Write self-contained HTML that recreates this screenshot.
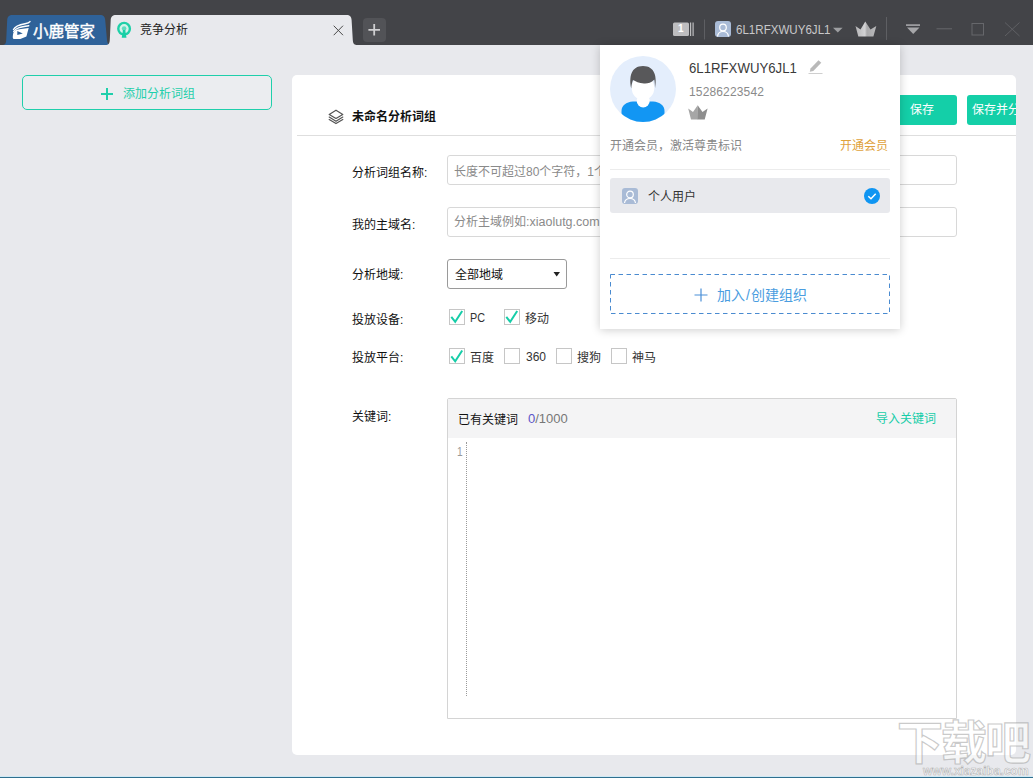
<!DOCTYPE html>
<html lang="zh-CN">
<head>
<meta charset="utf-8">
<title>小鹿管家 - 竞争分析</title>
<style>
*{box-sizing:border-box;margin:0;padding:0}
html,body{width:1033px;height:778px;overflow:hidden}
body{position:relative;background:#e8e9ed;font-family:"Liberation Sans","Noto Sans CJK SC",sans-serif;font-size:12px;color:#222}
.abs{position:absolute}
.t{position:absolute;white-space:nowrap;line-height:1}
.sx{display:inline-block;transform-origin:0 50%}
#titlebar{position:absolute;left:0;top:0;width:1033px;height:45px;background:#434448}
#logotab{position:absolute;left:0;top:0}
#plus{position:absolute;left:363px;top:18px;width:23px;height:24px;border-radius:4px;background:#525357}
#addbtn{position:absolute;left:22px;top:75px;width:250px;height:35px;border:1px solid #1fcfab;border-radius:5px;background:#ebedf0}
#card{position:absolute;left:292px;top:75px;width:724px;height:680px;background:#fff;border-radius:5px;overflow:hidden}
.lbl{position:absolute;left:60px;font-size:12px;color:#111;white-space:nowrap;line-height:14px}
.inp{position:absolute;left:155px;width:510px;height:30px;border:1px solid #d8d8d8;border-radius:3px;background:#fff;font-size:12px;color:#8a8a8a;white-space:nowrap;overflow:hidden}
.inp .t{left:6px}
.cb{position:absolute;width:16px;height:16px;border:1px solid #c6c6c6;background:#fff}
.cbt{position:absolute;font-size:12px;color:#333;white-space:nowrap;line-height:14px}
.btn{position:absolute;top:20px;width:70px;height:30px;background:#14cfa8;border-radius:3px;color:#fff;font-size:12px;line-height:31px;white-space:nowrap;text-align:center}
#pop{position:absolute;left:600px;top:45px;width:300px;height:284px;background:#fff;box-shadow:0 1px 9px rgba(0,0,0,.2)}
</style>
</head>
<body>
<div id="titlebar">
  <svg id="logotab" width="400" height="45" viewBox="0 0 400 45">
    <path d="M3 45 C5.500 44.500 6 43 6.200 40 L7.200 20 C7.500 16.500 9 15 12.500 15 L100 15 C103.500 15 104.800 16.500 105.200 20 L107 40 C107.300 43 108 44.500 110.500 45 Z" fill="#2f6299"/>
    <path d="M106.500 45 C109 44.500 109.600 43 109.800 40 L110.700 20 C111 16.500 112.500 15 116 15 L346.500 15 C350 15 351.300 16.500 351.600 20 L352.800 40 C353 43 353.600 44.500 356.500 45 Z" fill="#e8e9ed"/>
    <!-- logo glyph -->
    <g fill="none" stroke="#fff" stroke-width="1.400" stroke-linecap="round">
      <path d="M13.500 29.600 C15.200 25.600 20 24.500 25 23.700 C27.800 23.200 29.200 22.700 30 21.600"/>
      <path d="M13.700 31.500 C16 27.700 21 26.900 28.800 25.700"/>
    </g>
    <path fill="#fff" fill-rule="evenodd" d="M13.100 34 C13.800 30.600 17 29.600 21 29.100 L28.700 28 L26.400 36.600 L20.300 39.100 L14 39 C12.600 39 12.500 37.600 13.100 34 Z M17.300 31 L17.300 35 L22.800 33.400 Z"/>
    <!-- tab icon -->
    <circle cx="124.100" cy="28.700" r="5.800" fill="#d4f3ea" stroke="#1fd0a8" stroke-width="2.400"/>
    <path d="M118.600 35.300 L129.600 35.300 L129.600 38.500 L118.600 38.500 Z" fill="#e8e9ed"/>
    <circle cx="124.100" cy="28.500" r="2.300" fill="#5fdcc0"/>
    <path d="M123 30 L125.200 30 L126.500 37.700 L121.700 37.700 Z" fill="#17cfa6"/>
    <!-- close x -->
    <path d="M333.700 25.700 L343 35.200 M343 25.700 L333.700 35.200" stroke="#4a4a4a" stroke-width="1" fill="none"/>
  </svg>
  <div class="t" style="left:33px;top:24px;font-size:15.500px;font-weight:normal;color:#fff;-webkit-text-stroke:.450px #fff">小鹿管家</div>
  <div class="t" style="left:140px;top:24px;font-size:12px;color:#222">竞争分析</div>
  <div id="plus"><svg width="23" height="24"><path d="M11.200 6 V17.600 M5.400 11.800 H17" stroke="#cfcfd1" stroke-width="1.800" fill="none"/></svg></div>

  <svg class="abs" style="left:660px;top:10px" width="373" height="35" viewBox="660 10 373 35">
    <defs>
      <linearGradient id="cg" x1="0" x2="1" y1="0" y2="0"><stop offset="0" stop-color="#b4b4b6"/><stop offset=".45" stop-color="#d2d2d4"/><stop offset=".55" stop-color="#a9a9ab"/><stop offset="1" stop-color="#b9b9bb"/></linearGradient>
    </defs>
    <rect x="673" y="22.500" width="16" height="13.500" rx="1.500" fill="#bdbdbf"/>
    <rect x="690" y="22.500" width="1.200" height="13.500" fill="#bdbdbf"/>
    <rect x="692.500" y="22.500" width="1.200" height="13.500" fill="#bdbdbf"/>
    <rect x="704" y="19.500" width="1" height="20" fill="#5e5f63"/>
    <rect x="715" y="21" width="16" height="16" rx="3" fill="#a9bbd6"/>
    <circle cx="723" cy="27.500" r="3.300" fill="none" stroke="#fff" stroke-width="1.200"/>
    <path d="M717.500 36.500 C718 32.500 720.500 31.500 723 31.500 C725.500 31.500 728 32.500 728.500 36.500" fill="none" stroke="#fff" stroke-width="1.200"/>
    <path d="M833 27.800 L842.600 27.800 L837.800 32.500 Z" fill="#9d9ea1"/>
    <path d="M855.500 26 L860.500 29.600 L865.300 21.600 L870.500 29.600 L876.300 26 L873.400 36.500 L858.300 36.500 Z" fill="url(#cg)"/>
    <rect x="886" y="17" width="1" height="23" fill="#5e5f63"/>
    <rect x="906" y="24.300" width="14" height="1.600" fill="#a6a6a9"/>
    <path d="M907 27.500 L919.500 27.500 L913.200 34 Z" fill="#a6a6a9"/>
    <rect x="936.500" y="28.300" width="15.500" height="1" fill="#66676b"/>
    <rect x="972" y="23.500" width="11.500" height="11.500" fill="none" stroke="#66676b" stroke-width="1"/>
    <path d="M1005 22.500 L1019.500 36 M1019.500 22.500 L1005 36" stroke="#5f6064" stroke-width="1" fill="none"/>
  </svg>
  <div class="t" style="left:678px;top:24px;font-size:10px;color:#fff;font-weight:bold">1</div>
  <div class="t" style="left:736px;top:23px;font-size:13px;color:#c8c8ca"><span class="sx" style="transform:scaleX(.89)">6L1RFXWUY6JL1</span></div>
</div>

<div id="addbtn">
  <svg class="abs" style="left:77px;top:11px" width="14" height="14"><path d="M7 1 V13 M1 7 H13" stroke="#1fcfab" stroke-width="2" fill="none"/></svg>
  <div class="t" style="left:100px;top:12px;font-size:12px;color:#1fcfab">添加分析词组</div>
</div>

<div id="card">
  <svg class="abs" style="left:36px;top:34px" width="17" height="17" viewBox="0 0 17 17">
    <g fill="none" stroke="#555" stroke-width="1.200" stroke-linejoin="round" stroke-linecap="round">
      <path d="M8 1.200 L14.800 5.400 L8 9.400 L1.200 5.400 Z"/>
      <path d="M1.200 8.100 L8 12.200 L14.800 8.100"/>
      <path d="M1.200 10.500 L8 14.600 L14.800 10.500"/>
    </g>
  </svg>
  <div class="t" style="left:60px;top:36px;font-size:12px;font-weight:bold;color:#111">未命名分析词组</div>
  <div class="abs" style="left:5px;top:60px;width:719px;height:1px;background:#dedede"></div>
  <div class="btn" style="left:595px">保存</div>
  <div class="btn" style="left:675px">保存并分析</div>

  <div class="lbl" style="top:91px">分析词组名称:</div>
  <div class="inp" style="top:80px"><div class="t" style="top:10px">长度不可超过80个字符，1个汉字算两个字符</div></div>
  <div class="lbl" style="top:143px">我的主域名:</div>
  <div class="inp" style="top:132px"><div class="t" style="top:8px">分析主域例如<span style="font-size:12.500px">:xiaolutg.com</span></div></div>
  <div class="lbl" style="top:193px">分析地域:</div>
  <div class="abs" style="left:155px;top:184px;width:120px;height:30px;border:1px solid #9a9a9a;border-radius:3px;background:#fff">
    <div class="t" style="left:7px;top:9px;font-size:12px;color:#111">全部地域</div>
    <svg class="abs" style="left:105px;top:12px" width="8" height="5"><path d="M0.500 0 L7 0 L3.700 4.500 Z" fill="#222"/></svg>
  </div>

  <div class="lbl" style="top:238px">投放设备:</div>
  <div class="cb" style="left:157px;top:234px"></div><div class="cbt" style="left:178px;top:236px"><span class="sx" style="transform:scaleX(.9)">PC</span></div>
  <div class="cb" style="left:212px;top:234px"></div><div class="cbt" style="left:233px;top:237px">移动</div>
  <div class="lbl" style="top:276px">投放平台:</div>
  <div class="cb" style="left:157px;top:273px"></div><div class="cbt" style="left:178px;top:276px">百度</div>
  <div class="cb" style="left:212px;top:273px"></div><div class="cbt" style="left:234px;top:275px">360</div>
  <div class="cb" style="left:264px;top:273px"></div><div class="cbt" style="left:285px;top:276px">搜狗</div>
  <div class="cb" style="left:319px;top:273px"></div><div class="cbt" style="left:340px;top:276px">神马</div>
  <svg class="abs" style="left:155px;top:230px" width="80" height="64">
    <g fill="none" stroke="#16cda8" stroke-width="2">
      <path d="M4.300 11.800 L8.200 16.800 L15.200 6"/>
      <path d="M59.300 11.800 L63.200 16.800 L70.200 6"/>
      <path d="M4.300 51.300 L8.200 56.300 L15.200 45.500"/>
    </g>
  </svg>

  <div class="lbl" style="top:335px">关键词:</div>
  <div class="abs" style="left:155px;top:323px;width:510px;height:321px;border:1px solid #d4d4d4;border-radius:2px 2px 0 0;background:#fff">
    <div class="abs" style="left:0;top:0;width:508px;height:39px;background:#f4f4f5"></div>
    <div class="t" style="left:10px;top:15px;font-size:12px;color:#111">已有关键词</div>
    <div class="t" style="left:80px;top:13px;font-size:13px;color:#777"><span style="color:#5b55c9">0</span>/1000</div>
    <div class="t" style="left:428px;top:14px;font-size:12px;color:#16cda8">导入关键词</div>
    <div class="t" style="left:9px;top:47px;font-size:12px;color:#999"><span class="sx" style="transform:scaleX(.85)">1</span></div>
    <div class="abs" style="left:18px;top:43px;width:0;height:254px;border-left:1px dotted #9a9a9a"></div>
  </div>
</div>

<div id="pop">
  <svg class="abs" style="left:10px;top:11px" width="66" height="66" viewBox="0 0 66 66">
    <defs><clipPath id="av"><circle cx="33" cy="33" r="33"/></clipPath></defs>
    <circle cx="33" cy="33" r="33" fill="#e4eefc"/>
    <g clip-path="url(#av)">
      <path d="M11.500 66 L11.500 55 C11.500 49.500 16 46 23 45.500 L43 45.500 C50 46 54.500 49.500 54.500 55 L54.500 66 Z" fill="#1296f3"/>
      <circle cx="33.200" cy="45" r="6.500" fill="#fff"/>
      <ellipse cx="33" cy="32" rx="11.300" ry="12" fill="#fff"/>
      <path d="M21.200 32.500 C18.800 21 21 10 33 10 C45 10 47.200 21 45 32.500 C45 29 44.800 26 44.300 23.500 C41 27 37 27.800 34 27.500 C29 27 25.500 25.500 23 24 C22 26.500 21.500 29 21.200 32.500 Z" fill="#58585a"/>
    </g>
  </svg>
  <div class="t" style="left:89px;top:15px;font-size:15px;color:#3a3a3a"><span class="sx" style="transform:scaleX(.88)">6L1RFXWUY6JL1</span></div>
  <svg class="abs" style="left:207px;top:13px" width="17" height="17" viewBox="0 0 17 17">
    <path d="M3.500 10.500 L11.500 2.200 L14.300 4.800 L6.300 13 L2.800 13.800 Z" fill="#b9b9b9"/>
    <rect x="1.500" y="15" width="14" height="1" fill="#cfcfcf"/>
  </svg>
  <div class="t" style="left:89px;top:41px;font-size:12px;color:#8a8a8a;letter-spacing:.15px">15286223542</div>
  <svg class="abs" style="left:87px;top:59px" width="22" height="16" viewBox="0 0 22 16">
    <path d="M1.200 4.500 L6 8 L10.700 1.200 L11 15.400 L4 15.400 Z" fill="#a6a6a6"/>
    <path d="M10.700 1.200 L15.500 8 L20.600 4.500 L17.700 15.400 L10.700 15.400 Z" fill="#8e8e8e"/>
  </svg>
  <div class="t" style="left:10px;top:95px;font-size:12px;color:#888">开通会员，激活尊贵标识</div>
  <div class="t" style="left:240px;top:95px;font-size:12px;color:#e0a23c">开通会员</div>
  <div class="abs" style="left:10px;top:124px;width:280px;height:1px;background:#ececec"></div>
  <div class="abs" style="left:10px;top:133px;width:280px;height:35px;background:#e8e9ed;border-radius:3px">
    <svg class="abs" style="left:12px;top:10px" width="16" height="16" viewBox="0 0 16 16">
      <rect x="0" y="0" width="16" height="16" rx="3" fill="#a9bbd6"/>
      <circle cx="8" cy="6.500" r="3.300" fill="none" stroke="#fff" stroke-width="1.200"/>
      <path d="M2.500 15 C3 11.500 5.500 10.500 8 10.500 C10.500 10.500 13 11.500 13.500 15" fill="none" stroke="#fff" stroke-width="1.200"/>
    </svg>
    <div class="t" style="left:38px;top:13px;font-size:12px;color:#333">个人用户</div>
    <svg class="abs" style="left:254px;top:10px" width="16" height="16" viewBox="0 0 16 16">
      <circle cx="8" cy="8" r="8" fill="#0f95f2"/>
      <path d="M4.300 8.200 L7 10.800 L11.700 5.800" fill="none" stroke="#fff" stroke-width="1.500"/>
    </svg>
  </div>
  <div class="abs" style="left:10px;top:213px;width:280px;height:1px;background:#ececec"></div>
  <div class="abs" style="left:10px;top:229px;width:280px;height:40px">
    <svg class="abs" style="left:0;top:0" width="280" height="40"><rect x="0.500" y="0.500" width="279" height="39" fill="none" stroke="#4a8bd0" stroke-width="1" stroke-dasharray="4.500 3.500"/></svg>
    <svg class="abs" style="left:84px;top:14px" width="14" height="14"><path d="M7 0.500 V13.500 M0.500 7 H13.500" stroke="#4a8fd8" stroke-width="1.200" fill="none"/></svg>
    <div class="t" style="left:107px;top:14px;font-size:14px;color:#4a9de0">加入<span style="padding:0 1px">/</span>创建组织</div>
  </div>
</div>

<div class="t" style="left:897px;top:720px;font-size:46px;font-weight:bold;color:rgba(255,255,255,.6);-webkit-text-stroke:1.200px rgba(150,150,150,.5);letter-spacing:-2px">下载吧</div>
<div class="t" style="left:923px;top:765px;font-size:12px;font-weight:bold;color:rgba(255,255,255,.7);-webkit-text-stroke:.600px rgba(140,140,140,.6)">www.xiazaiba.com</div>
<div class="abs" style="left:0;top:776px;width:1033px;height:1px;background:#cfe9f5"></div>
<div class="abs" style="left:0;top:777px;width:1033px;height:1px;background:#2f6f8f"></div>
</body>
</html>
